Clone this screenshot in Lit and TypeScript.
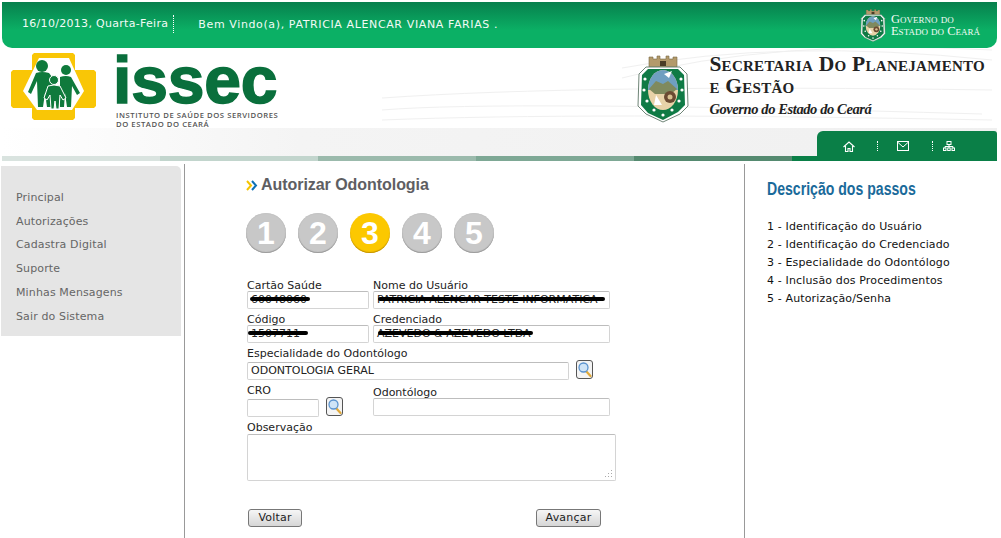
import { LitElement, css, html, svg } from 'lit';
import { customElement } from 'lit/decorators.js';

const MENU = ['Principal', 'Autorizações', 'Cadastra Digital', 'Suporte', 'Minhas Mensagens', 'Sair do Sistema'];
const STEPS = [
  '1 - Identificação do Usuário',
  '2 - Identificação do Credenciado',
  '3 - Especialidade do Odontólogo',
  '4 - Inclusão dos Procedimentos',
  '5 - Autorização/Senha',
];
const STRIPE = ['#d9e3df', '#c2d5cd', '#9bbaac', '#7ea895', '#558a70', '#0a7f47'];

// coat of arms, drawn once on a 52x70 grid and scaled where it is used
const shield = (w: number, h: number) => html`
  <svg width=${w} height=${h} viewBox="0 0 52 70">
    <path d="M12 14V4h4v2h4V3h3v3h6V3h3v3h4V4h4v10z" fill="#b39a6b" stroke="#7a6845" stroke-width=".6"/>
    <rect x="23" y="8" width="6" height="5" fill="#4a3c26"/>
    <path d="M9 14h34l7 7 1 32-8 8-17 8-17-8-8-8 1-32z" fill="#fff" stroke="#6f8577" stroke-width="1"/>
    <path d="M11 16h30l6 6 1 30-7 7-15 8-15-7-7-8 1-30z" fill="#0f7a45"/>
    <ellipse cx="26" cy="37" rx="15" ry="20" fill="#e8d2a8"/>
    <path d="M11 37a15 20 0 0 1 30 0z" fill="#6f9fc0"/>
    <path d="M12 36l7-8 7 3 5-3 9 8-6 5H18z" fill="#7f8a5e"/>
    <path d="M27 21l8-3-3 7z" fill="#fff"/>
    <path d="M19 42l-2 10h8z" fill="#fff"/>
    <circle cx="33" cy="44" r="6" fill="#6b4a32"/>
    <circle cx="33" cy="44" r="2.5" fill="#d8c090"/>
    ${[[8, 26], [7, 37], [10, 48], [17, 57], [26, 62], [35, 57], [42, 48], [45, 37], [44, 26]].map(
      ([x, y]) => svg`<circle cx=${x} cy=${y} r="1.6" fill="#fff"/>`,
    )}
  </svg>
`;

const familyLogo = html`
  <svg width="85" height="67" viewBox="0 0 85 67">
    <path d="M23 0h39l2 2v15h19l2 2v34l-2 2H64v10l-2 2H23l-2-2V55H2l-2-2V19l2-2h19V2z" fill="#f9c606"/>
    <path d="M28 5h30l15 33-12 19H26L12 38z" fill="#fff"/>
    <g fill="#0f7a3c">
      <circle cx="31" cy="13" r="6"/>
      <path d="M25 20q6-2 13 0l6 8-4 26h-4l-2-14-2 14h-5l-1-26-6 13-3-2z"/>
      <circle cx="55" cy="17" r="5"/>
      <path d="M49 24q6-2 11 0l9 16-3 2-5-9-1 21h-4l-2-14-1 14h-4z"/>
    </g>
    <circle cx="43" cy="27" r="4.500" fill="#0f7a3c" stroke="#fff"/>
    <path d="M37 33q6-2 12 0l6 12-3 2-3-5-1 14h-3l-1-8-1 8h-3l-1-14-3 5-3-2z" fill="#0f7a3c" stroke="#fff"/>
  </svg>
`;

const magnifier = html`
  <button class="lookup" type="button" aria-label="Pesquisar">
    <svg width="15" height="17" viewBox="0 0 15 17">
      <path d="M9 10l4.500 5" stroke="#e0a93a" stroke-width="2.200" stroke-linecap="round"/>
      <circle cx="6.500" cy="6.500" r="4.500" fill="#cfe4f7" stroke="#5a93cf" stroke-width="1.300"/>
    </svg>
  </button>
`;

@customElement('app-root')
export class AppRoot extends LitElement {
  static override styles = css`
    :host {
      display: block;
      width: 1001px;
      height: 538px;
      overflow: hidden;
      background: #fff;
      font-family: 'DejaVu Sans', Verdana, sans-serif;
      font-size: 11px;
    }
    .top,
    .header,
    .band {
      margin: 0 4px 0 2px;
    }
    .top {
      display: flex;
      align-items: center;
      height: 46px;
      margin-top: 2px;
      padding: 0 17px 0 20px;
      box-sizing: border-box;
      color: #f2fbf6;
      background: linear-gradient(#07804d, #0bb065 62%);
      border-radius: 0 0 10px 10px;
    }
    .top > span {
      margin-bottom: 2px;
    }
    .date {
      padding-right: 5px;
      border-right: 1px dotted #fff;
      line-height: 18px;
      margin-right: 24px;
      letter-spacing: 0.3px;
    }
    .welcome {
      letter-spacing: 0.62px;
    }
    .gov-small {
      margin-left: auto;
      display: flex;
      align-items: center;
      gap: 5px;
      font: 12.500px/12px 'Liberation Serif', serif;
      font-variant: small-caps;
      color: #f4fbf6;
    }
    .header {
      display: flex;
      height: 80px;
      padding-left: 9px;
      position: relative;
    }
    .curves {
      position: absolute;
      inset: 0;
    }
    .family {
      margin-top: 5px;
    }
    .issec {
      margin-left: 20px;
      width: 170px;
      color: #0a6f3c;
      position: relative;
    }
    .issec b {
      display: block;
      font: bold 66px/61px 'Liberation Sans', sans-serif;
      letter-spacing: -0.2px;
      -webkit-text-stroke: 1.500px #0a6f3c;
      margin: 2px 0 0 -3px;
      height: 61px;
    }
    .issec span {
      display: block;
      font: 600 7.700px/8.500px 'Open Sans', sans-serif;
      letter-spacing: 0.55px;
      color: #555;
      white-space: nowrap;
    }
    .sec {
      margin-left: auto;
      display: flex;
      gap: 20px;
      margin-right: 12px;
      position: relative;
    }
    .sec svg {
      margin-top: 5px;
    }
    .sec h1 {
      margin: 5px 0 0;
      font: bold 21.500px/22px 'Liberation Serif', serif;
      font-variant: small-caps;
      color: #222;
      white-space: nowrap;
      letter-spacing: 0.28px;
    }
    .sec em {
      display: block;
      margin-top: 3px;
      font: italic bold 14.500px/18px 'Liberation Serif', serif;
      letter-spacing: -0.4px;
      color: #222;
    }
    .band {
      position: relative;
    }
    .soft {
      height: 28px;
      background: linear-gradient(90deg, #fff, #f4f4f4 30%, #f0f0f0);
    }
    .stripe {
      display: flex;
      height: 5px;
    }
    .stripe i {
      flex: 158px 0 0;
    }
    .stripe i:last-child {
      flex: 1;
    }
    .quick {
      position: absolute;
      right: 0;
      top: 3px;
      width: 180px;
      height: 30px;
      display: flex;
      align-items: center;
      background: #0a7f47;
      border-radius: 6px 3px 3px 0;
      color: #fff;
      padding-left: 26px;
      box-sizing: border-box;
    }
    .quick .sep {
      width: 0;
      height: 10px;
      border-left: 1px dotted #fff;
    }
    .body {
      display: grid;
      grid-template-columns: 184px 1px 559px 1px 1fr;
      height: 377px;
    }
    .side {
      margin: 5px 3px 0 1px;
      height: 170px;
      background: #e5e5e5;
      border-radius: 0 5px 0 0;
      padding: 20px 0 0 15px;
      box-sizing: border-box;
      color: #666;
      line-height: 23.700px;
      letter-spacing: 0.13px;
    }
    .rule {
      background: #999;
      margin-top: 3px;
    }
    .main {
      padding: 15px 0 0 61px;
    }
    .title {
      display: flex;
      align-items: center;
      gap: 3px;
      height: 18px;
      font: bold 16px/18px 'Liberation Sans', sans-serif;
      letter-spacing: -0.05px;
      color: #5e5e62;
    }
    .steps {
      display: flex;
      gap: 12px;
      margin-top: 19px;
    }
    .dot {
      width: 40px;
      height: 40px;
      border-radius: 50%;
      background: #c8c8c8;
      box-shadow: inset 0 -1px 1px #999, inset 0 0 1px #aaa;
      color: #fff;
      font: bold 32px/40px 'Liberation Sans', sans-serif;
      text-align: center;
    }
    .dot.on {
      background: #fcc800;
      box-shadow: inset 0 -1px 1px #c09000;
    }
    form {
      margin: 26px 0 0 1px;
      width: 369px;
      color: #222;
      line-height: 12px;
    }
    .row {
      display: flex;
      gap: 4px;
      align-items: flex-start;
    }
    .row + .row {
      margin-top: 4px;
    }
    .lbl {
      padding-top: 2px;
      line-height: 10px;
    }
    .narrow {
      width: 122px;
    }
    .wide {
      width: 237px;
    }
    .box {
      position: relative;
      height: 18px;
      box-sizing: border-box;
      border: 1px solid #d4d4d4;
      border-top-color: #bdbdbd;
      border-radius: 2px;
      padding: 0 3px;
      line-height: 16px;
      color: #222;
      white-space: nowrap;
      overflow: hidden;
      background: #fff;
    }
    .blot {
      position: absolute;
      height: 4px;
      top: 5px;
      background: #000;
      border-radius: 2px;
    }
    .spec {
      margin-top: 5px;
    }
    .spec .inner {
      display: flex;
      gap: 7px;
      margin-top: 2px;
    }
    .spec .box {
      width: 322px;
    }
    .lookup {
      width: 17px;
      height: 19px;
      margin: -2px 0 0;
      padding: 0;
      border: 1px solid #555;
      border-radius: 3px;
      background: #f4f4f4;
      box-sizing: border-box;
      display: flex;
      align-items: center;
      justify-content: center;
    }
    .cro {
      margin-top: 5px;
    }
    .cro .inner {
      display: flex;
      gap: 7px;
      margin-top: 2px;
    }
    .cro .box {
      width: 72px;
    }
    .odonto {
      margin: 7px 0 0 26px;
    }
    .odonto .box {
      margin-top: -1px;
    }
    .obs {
      margin-top: 5px;
    }
    .area {
      height: 47px;
      border: 1px solid #d4d4d4;
      border-top-color: #bdbdbd;
      border-radius: 2px;
      box-sizing: border-box;
      position: relative;
    }
    .grip {
      position: absolute;
      right: 2px;
      bottom: 2px;
    }
    .actions {
      display: flex;
      justify-content: space-between;
      margin: 28px 15px 0 1px;
    }
    .actions button {
      height: 18px;
      padding: 0;
      font: 11px/16px 'DejaVu Sans', sans-serif;
      color: #222;
      letter-spacing: 0.2px;
      border: 1px solid #777;
      border-radius: 3px;
      background: linear-gradient(#f6f6f6, #d6d6d6);
    }
    .aside {
      padding: 18px 0 0 22px;
    }
    .aside h2 {
      margin: 0;
      font: bold 17.500px/20px 'Liberation Sans', sans-serif;
      color: #1a6a9a;
      white-space: nowrap;
      transform: scaleX(0.805);
      transform-origin: left;
    }
    .aside ul {
      list-style: none;
      margin: 19px 0 0;
      padding: 0;
      color: #111;
      line-height: 18px;
      letter-spacing: 0.14px;
    }
  `;

  private field(label: string, value: string, cls: string, blot: [number, number]) {
    return html`
      <div class=${cls}>
        <div class="lbl">${label}</div>
        <div class="box">
          ${value}<span class="blot" style="left:${blot[0]}px;width:${blot[1]}px"></span>
        </div>
      </div>
    `;
  }

  override render() {
    return html`
      <div class="top">
        <span class="date">16/10/2013, Quarta-Feira</span>
        <span class="welcome">Bem Vindo(a), PATRICIA ALENCAR VIANA FARIAS .</span>
        <div class="gov-small">
          ${shield(26, 34)}
          <div>Governo do<br />Estado do Ceará</div>
        </div>
      </div>

      <header class="header">
        <svg class="curves" width="995" height="80" fill="none" stroke="#f0f0f0">
          <path d="M380 62q120-10 600 4M380 50q200-14 610-8M380 72q200-8 610 0M620 30q150-40 370-28M620 20q160-30 370-8" />
        </svg>
        <div class="family">${familyLogo}</div>
        <div class="issec">
          <b>issec</b>
          <span>INSTITUTO DE SAÚDE DOS SERVIDORES</span>
          <span>DO ESTADO DO CEARÁ</span>
        </div>
        <div class="sec">
          ${shield(52, 70)}
          <div>
            <h1>Secretaria Do Planejamento<br />e Gestão</h1>
            <em>Governo do Estado do Ceará</em>
          </div>
        </div>
      </header>

      <div class="band">
        <div class="soft"></div>
        <div class="stripe">${STRIPE.map((c) => html`<i style="background:${c}"></i>`)}</div>
        <nav class="quick">
          <svg width="12" height="11" viewBox="0 0 12 11" fill="none" stroke="#fff" stroke-width="1.100">
            <path d="M.5 6L6 1l5.500 5M2.500 5v5.500h2.500V7.500h2v3h2.500V5" />
          </svg>
          <span class="sep" style="margin-left:22px"></span>
          <svg style="margin-left:19px" width="12" height="10" viewBox="0 0 12 10" fill="none" stroke="#fff">
            <rect x=".5" y=".5" width="11" height="9" /><path d="M.5 1L6 6l5.500-5" />
          </svg>
          <span class="sep" style="margin-left:23px"></span>
          <svg style="margin-left:10px" width="12" height="10" viewBox="0 0 12 10" fill="none" stroke="#fff">
            <rect x="4" y=".5" width="4" height="3" /><path d="M6 3.500V5M2 7V5.500h8V7M6 5v2" />
            <rect x=".5" y="7" width="2.500" height="2.500" /><rect x="4.700" y="7" width="2.500" height="2.500" /><rect x="9" y="7" width="2.500" height="2.500" />
          </svg>
        </nav>
      </div>

      <div class="body">
        <div class="side">${MENU.map((m) => html`<div>${m}</div>`)}</div>
        <div class="rule"></div>
        <main class="main">
          <div class="title">
            <svg width="12" height="11" viewBox="0 0 12 11" fill="none" stroke-width="2">
              <path d="M1 1l4 4.500-4 4.500" stroke="#f5c400" /><path d="M6 1l4 4.500-4 4.500" stroke="#0f72b5" />
            </svg>
            Autorizar Odontologia
          </div>
          <div class="steps">
            ${[1, 2, 3, 4, 5].map((n) => html`<div class="dot ${n === 3 ? 'on' : ''}">${n}</div>`)}
          </div>
          <form>
            <div class="row">
              ${this.field('Cartão Saúde', '60048060', 'narrow', [2, 60])}
              ${this.field('Nome do Usuário', 'PATRICIA ALENCAR TESTE INFORMATICA', 'wide', [4, 227])}
            </div>
            <div class="row">
              ${this.field('Código', '1507711', 'narrow', [0, 60])}
              ${this.field('Credenciado', 'AZEVEDO & AZEVEDO LTDA', 'wide', [4, 155])}
            </div>
            <div class="spec">
              <div>Especialidade do Odontólogo</div>
              <div class="inner"><div class="box">ODONTOLOGIA GERAL</div>${magnifier}</div>
            </div>
            <div class="row">
              <div class="cro">
                <div>CRO</div>
                <div class="inner"><div class="box"></div>${magnifier}</div>
              </div>
              <div class="odonto wide">
                <div>Odontólogo</div>
                <div class="box"></div>
              </div>
            </div>
            <div class="obs">
              <div>Observação</div>
              <div class="area">
                <svg class="grip" width="9" height="9" fill="#aaa">
                  <rect x="7" y="1" width="1" height="1" /><rect x="4" y="4" width="1" height="1" /><rect x="7" y="4" width="1" height="1" />
                  <rect x="1" y="7" width="1" height="1" /><rect x="4" y="7" width="1" height="1" /><rect x="7" y="7" width="1" height="1" />
                </svg>
              </div>
            </div>
            <div class="actions">
              <button type="button" style="width:54px">Voltar</button>
              <button type="button" style="width:65px">Avançar</button>
            </div>
          </form>
        </main>
        <div class="rule"></div>
        <aside class="aside">
          <h2>Descrição dos passos</h2>
          <ul>${STEPS.map((s) => html`<li>${s}</li>`)}</ul>
        </aside>
      </div>
    `;
  }
}
